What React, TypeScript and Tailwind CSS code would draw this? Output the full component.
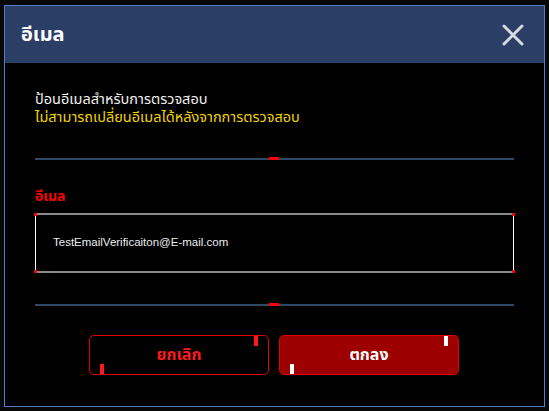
import React from "react";

const thai = { fontFamily: '"Noto Sans Thai", Tahoma, "Liberation Sans", sans-serif' };

function Divider() {
  return (
    <div className="relative h-[2px] w-full bg-[#2f4966]">
      <div className="absolute left-[234px] top-[-1px] h-[3px] w-[10px] bg-[#ff0000]" />
    </div>
  );
}

export default function App() {
  return (
    <div className="h-[411px] w-[549px] bg-[#080808] pl-[4px] pt-[5px]" style={thai}>
      <div className="flex h-[402px] w-[541px] flex-col border border-[#5a7bc9] bg-black">
        <div className="flex h-[57px] items-center justify-between bg-[#2b3f66] pl-[16px] pr-[20px]">
          <span className="text-[20px] font-bold leading-none text-white">อีเมล</span>
          <svg width="22" height="22" viewBox="0 0 22 22">
            <path d="M2 2 L20 20 M20 2 L2 20" stroke="#d6d9e0" strokeWidth="3" strokeLinecap="round" />
          </svg>
        </div>
        <div className="flex flex-1 flex-col px-[30px]">
          <div className="mt-[28px] text-[14.5px] leading-[18px]">
            <div className="text-[#f0f0f0]">ป้อนอีเมลสำหรับการตรวจสอบ</div>
            <div className="text-[#f2d200]">ไม่สามารถเปลี่ยนอีเมลได้หลังจากการตรวจสอบ</div>
          </div>
          <div className="mt-[31px]">
            <Divider />
          </div>
          <div className="mt-[28px] text-[14px] font-bold leading-[18px] text-[#ff0000]">อีเมล</div>
          <div className="relative mt-[7px] flex h-[60px] items-center border-x border-y-2 border-x-white border-y-[#8a8a8a] pl-[17px]">
            <span className="text-[11.5px] text-[#ececec]" style={{ fontFamily: '"Liberation Sans", sans-serif' }}>
              TestEmailVerificaiton@E-mail.com
            </span>
            <div className="absolute left-[-2px] top-[-2px] h-[3px] w-[3px] bg-[#ff0000]" />
            <div className="absolute right-[-2px] top-[-2px] h-[3px] w-[3px] bg-[#ff0000]" />
            <div className="absolute bottom-[-2px] left-[-2px] h-[3px] w-[3px] bg-[#ff0000]" />
            <div className="absolute bottom-[-2px] right-[-2px] h-[3px] w-[3px] bg-[#ff0000]" />
          </div>
          <div className="mt-[31px]">
            <Divider />
          </div>
          <div className="mt-[29px] flex gap-[10px] pl-[54px]">
            <button className="relative flex h-[40px] w-[180px] items-center justify-center rounded-[5px] border border-[#e00000] bg-black text-[16px] font-bold text-[#ff1a1a]">
              ยกเลิก
              <span className="absolute right-[10px] top-0 h-[10px] w-[4px] bg-[#ff1a1a]" />
              <span className="absolute bottom-0 left-[10px] h-[10px] w-[4px] bg-[#ff1a1a]" />
            </button>
            <button className="relative flex h-[40px] w-[180px] items-center justify-center rounded-[5px] border border-[#e00000] bg-[#9c0000] text-[16px] font-bold text-white">
              ตกลง
              <span className="absolute right-[10px] top-0 h-[10px] w-[4px] bg-white" />
              <span className="absolute bottom-0 left-[10px] h-[10px] w-[4px] bg-white" />
            </button>
          </div>
        </div>
      </div>
    </div>
  );
}
